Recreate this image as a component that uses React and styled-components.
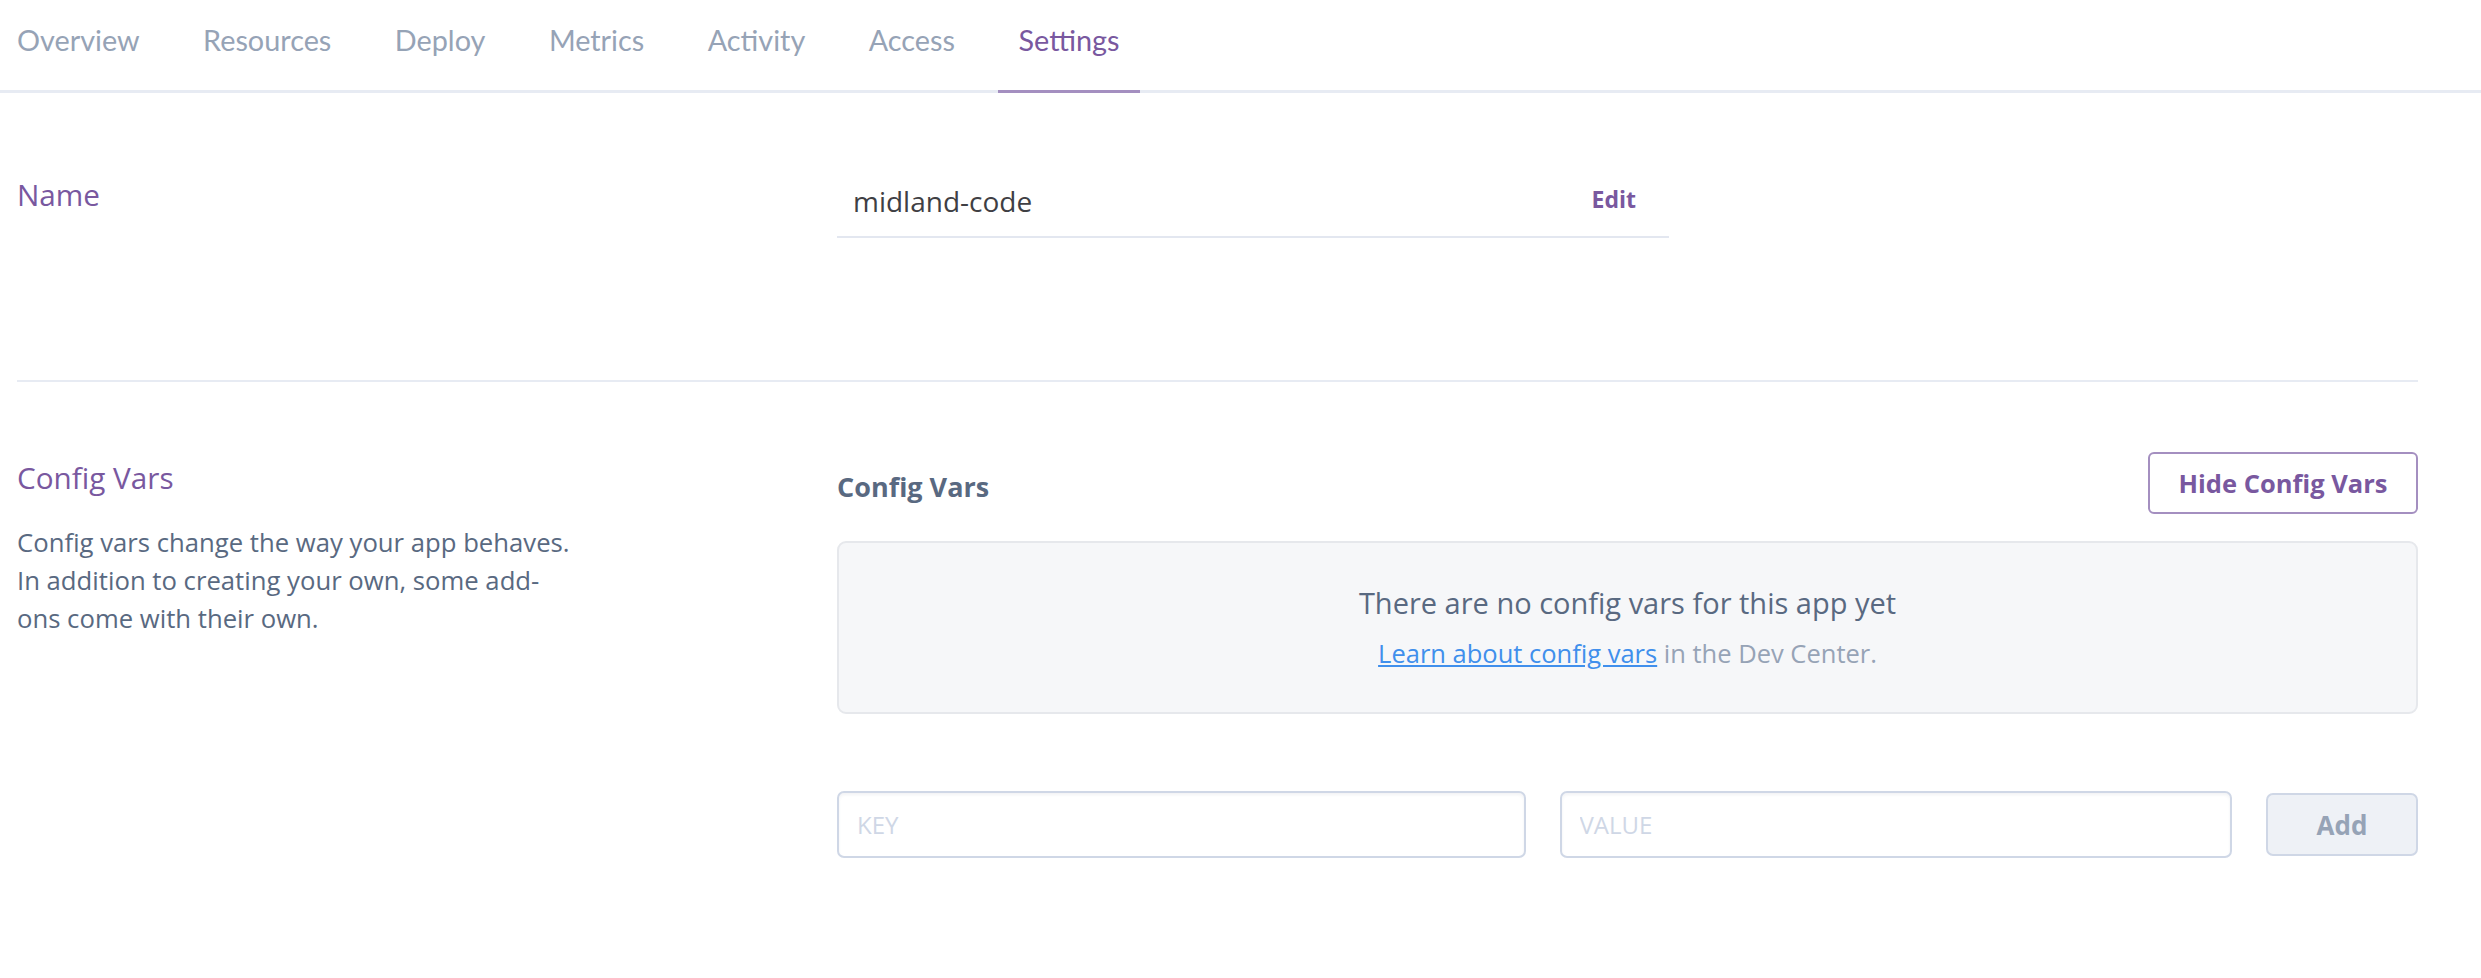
import React from 'react';
import styled, { createGlobalStyle } from 'styled-components';

const GlobalStyle = createGlobalStyle`
  body {
    margin: 0;
    background: #fff;
    font-family: "Open Sans", Lato, sans-serif;
  }
`;

const Page = styled.div`
  width: 100%;
  padding: 0 63px 0 17px;
  box-sizing: border-box;
`;

const TabBar = styled.nav`
  display: flex;
  gap: 21.5px;
  margin: 0 -63px 0 -21px;
  border-bottom: 3px solid #e7ebf3;
  font-family: Lato, sans-serif;
`;

const Tab = styled.a`
  display: block;
  padding: 22px 21px 32px;
  font-size: 28.8px;
  line-height: 36px;
  color: ${(p) => (p.active ? '#79589f' : '#96a3b6')};
  text-decoration: none;
  border-bottom: 3px solid ${(p) => (p.active ? '#a48fc0' : 'transparent')};
  margin-bottom: -3px;
`;

const Section = styled.section`
  display: grid;
  grid-template-columns: 820px 1fr;
  padding: ${(p) => p.pad};
  border-bottom: ${(p) => (p.divided ? '2px solid #e7ebf3' : 'none')};
`;

const Label = styled.h3`
  margin: ${(p) => p.offset || 0} 0 0;
  font-size: 29.7px;
  line-height: 40px;
  font-weight: 400;
  color: #79589f;
`;

const Description = styled.p`
  margin: 26px 0 0;
  max-width: 560px;
  font-size: 25.7px;
  line-height: 38px;
  color: #596981;
`;

const NameField = styled.div`
  width: 832px;
  display: flex;
  justify-content: space-between;
  align-items: center;
  padding: 6px 33px 15px 16px;
  box-sizing: border-box;
  border-bottom: 2px solid #e3e7f0;
`;

const NameValue = styled.span`
  font-size: 28px;
  line-height: 40px;
  color: #3f3f44;
`;

const EditLink = styled.button`
  border: none;
  background: none;
  padding: 0;
  font-family: inherit;
  font-size: 23px;
  font-weight: 700;
  color: #79589f;
  margin-top: -4px;
`;

const HeaderRow = styled.div`
  display: flex;
  justify-content: space-between;
  align-items: center;
`;

const Heading = styled.h4`
  margin: 6px 0 0;
  font-size: 27px;
  font-weight: 700;
  color: #596981;
`;

const OutlineButton = styled.button`
  width: 270px;
  height: 62px;
  padding: 0;
  border: 2px solid #a48fc0;
  border-radius: 6px;
  background: #fff;
  font-family: inherit;
  font-size: 25.5px;
  font-weight: 700;
  color: #79589f;
`;

const EmptyBox = styled.div`
  margin-top: 27px;
  height: 173px;
  box-sizing: border-box;
  padding-top: 40px;
  background: #f6f7f9;
  border: 2px solid #e6e8ec;
  border-radius: 9px;
  text-align: center;
`;

const EmptyTitle = styled.div`
  font-size: 29px;
  line-height: 40px;
  color: #596981;
`;

const EmptyHint = styled.div`
  margin-top: 13px;
  font-size: 25.5px;
  line-height: 34px;
  color: #96a3b6;

  a {
    color: #408fec;
    text-decoration: underline;
  }
`;

const AddRow = styled.div`
  margin-top: 77px;
  display: grid;
  grid-template-columns: 688fr 672fr 152px;
  column-gap: 34px;
  align-items: center;
`;

const Input = styled.input`
  height: 67px;
  box-sizing: border-box;
  padding: 0 18px;
  border: 2px solid #cfd7e6;
  border-radius: 7px;
  box-shadow: inset 0 2px 3px rgba(89, 105, 129, 0.08);
  font-family: inherit;
  font-size: 24px;
  color: #3f3f44;
  outline: none;

  &::placeholder {
    color: #cfd7e6;
  }
`;

const AddButton = styled.button`
  height: 63px;
  border: 2px solid #cfd7e6;
  border-radius: 7px;
  background: #eef1f6;
  font-family: inherit;
  font-size: 26px;
  font-weight: 700;
  color: #96a3b6;
`;

const tabs = ['Overview', 'Resources', 'Deploy', 'Metrics', 'Activity', 'Access', 'Settings'];

export default function App() {
  return (
    <>
      <GlobalStyle />
      <Page>
        <TabBar>
          {tabs.map((t) => (
            <Tab key={t} active={t === 'Settings'}>
              {t}
            </Tab>
          ))}
        </TabBar>

        <Section pad="82px 0 142px" divided>
          <Label>Name</Label>
          <div>
            <NameField>
              <NameValue>midland-code</NameValue>
              <EditLink>Edit</EditLink>
            </NameField>
          </div>
        </Section>

        <Section pad="70px 0 120px">
          <div>
            <Label offset="6px">Config Vars</Label>
            <Description>
              Config vars change the way your app behaves. In addition to creating your own, some add-ons come with
              their own.
            </Description>
          </div>
          <div>
            <HeaderRow>
              <Heading>Config Vars</Heading>
              <OutlineButton>Hide Config Vars</OutlineButton>
            </HeaderRow>
            <EmptyBox>
              <EmptyTitle>There are no config vars for this app yet</EmptyTitle>
              <EmptyHint>
                <a href="#">Learn about config vars</a> in the Dev Center.
              </EmptyHint>
            </EmptyBox>
            <AddRow>
              <Input placeholder="KEY" />
              <Input placeholder="VALUE" />
              <AddButton>Add</AddButton>
            </AddRow>
          </div>
        </Section>
      </Page>
    </>
  );
}
